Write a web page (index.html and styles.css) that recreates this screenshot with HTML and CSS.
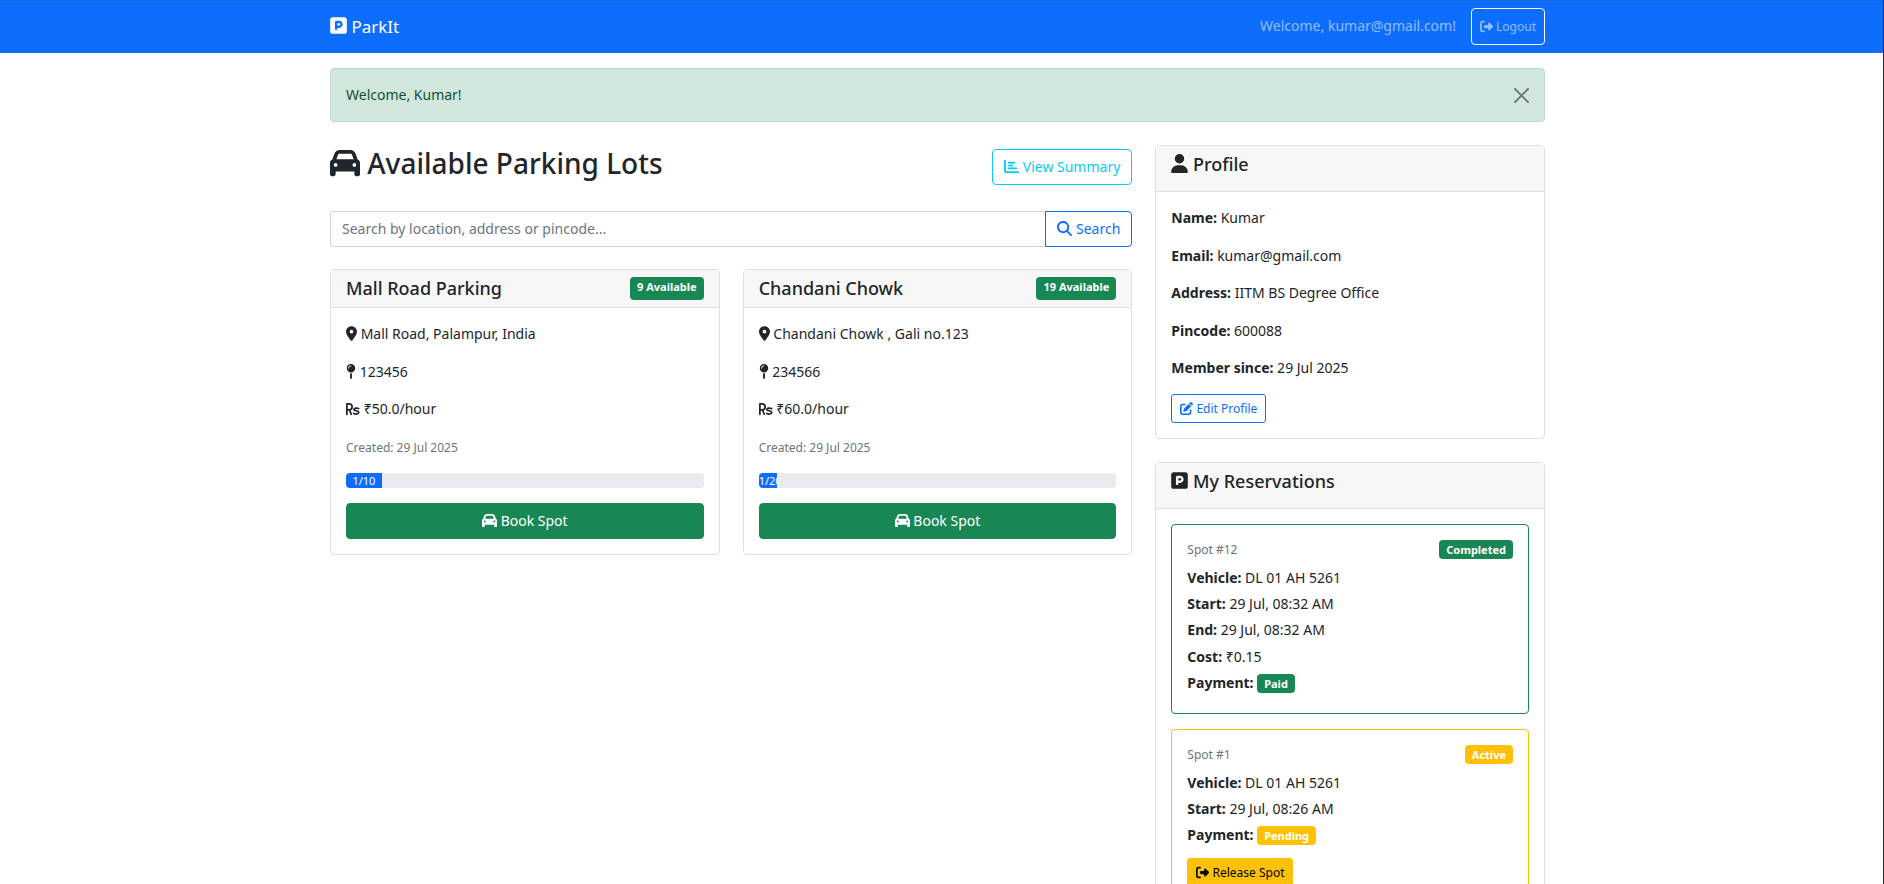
FILE: index.html
```html
<!DOCTYPE html>
<html lang="en">
<head>
<meta charset="utf-8">
<meta name="viewport" content="width=device-width, initial-scale=1">
<title>ParkIt</title>
<link rel="stylesheet" href="styles.css">
</head>
<body>
<svg class="sprite" aria-hidden="true">
  <symbol id="i-parking" viewBox="0 0 448 512"><path d="M64 32C28.700 32 0 60.700 0 96V416c0 35.300 28.700 64 64 64H384c35.300 0 64-28.700 64-64V96c0-35.300-28.700-64-64-64H64zM192 256h48c17.700 0 32-14.300 32-32s-14.300-32-32-32H192v64zm48 64H192v32c0 17.700-14.300 32-32 32s-32-14.300-32-32V288 168c0-22.100 17.900-40 40-40h72c53 0 96 43 96 96s-43 96-96 96z"/></symbol>
  <symbol id="i-car" viewBox="0 0 512 512"><path d="M135.200 117.400L109.100 192H402.900l-26.100-74.600C372.300 104.600 360.200 96 346.600 96H165.400c-13.600 0-25.700 8.600-30.200 21.400zM39.600 196.800L74.800 96.300C88.300 57.800 124.600 32 165.400 32H346.600c40.800 0 77.100 25.800 90.600 64.300l35.200 100.500c23.200 9.600 39.600 32.500 39.600 59.200V400v48c0 17.700-14.300 32-32 32H448c-17.700 0-32-14.300-32-32V400H96v48c0 17.700-14.300 32-32 32H32c-17.700 0-32-14.300-32-32V400 256c0-26.700 16.400-49.600 39.600-59.200zM128 288a32 32 0 1 0 -64 0 32 32 0 1 0 64 0zm288 32a32 32 0 1 0 0-64 32 32 0 1 0 0 64z"/></symbol>
  <symbol id="i-chart" viewBox="0 0 512 512"><path d="M32 32c17.700 0 32 14.300 32 32V400c0 8.800 7.200 16 16 16H480c17.700 0 32 14.300 32 32s-14.300 32-32 32H80c-44.200 0-80-35.800-80-80V64C0 46.300 14.300 32 32 32zm96 96c0-17.700 14.300-32 32-32l192 0c17.700 0 32 14.300 32 32s-14.300 32-32 32l-192 0c-17.700 0-32-14.300-32-32zm32 64H288c17.700 0 32 14.300 32 32s-14.300 32-32 32H160c-17.700 0-32-14.300-32-32s14.300-32 32-32zm0 96H416c17.700 0 32 14.300 32 32s-14.300 32-32 32H160c-17.700 0-32-14.300-32-32s14.300-32 32-32z"/></symbol>
  <symbol id="i-search" viewBox="0 0 512 512"><path d="M416 208c0 45.900-14.900 88.300-40 122.700L502.600 457.400c12.500 12.500 12.500 32.800 0 45.300s-32.800 12.500-45.300 0L330.700 376c-34.400 25.200-76.800 40-122.700 40C93.100 416 0 322.900 0 208S93.100 0 208 0S416 93.100 416 208zM208 352a144 144 0 1 0 0-288 144 144 0 1 0 0 288z"/></symbol>
  <symbol id="i-location" viewBox="0 0 384 512"><path d="M215.700 499.200C267 435 384 279.400 384 192C384 86 298 0 192 0S0 86 0 192c0 87.400 117 243 168.300 307.200c12.300 15.300 35.100 15.300 47.400 0zM192 128a64 64 0 1 1 0 128 64 64 0 1 1 0-128z"/></symbol>
  <symbol id="i-pin" viewBox="0 0 320 512"><path d="M16 144a144 144 0 1 1 288 0A144 144 0 1 1 16 144zM160 80c8.800 0 16-7.200 16-16s-7.200-16-16-16c-53 0-96 43-96 96c0 8.800 7.200 16 16 16s16-7.200 16-16c0-35.300 28.700-64 64-64zM128 480V317.100c10.400 1.900 21.100 2.900 32 2.900s21.600-1 32-2.900V480c0 17.700-14.300 32-32 32s-32-14.300-32-32z"/></symbol>
  <symbol id="i-rupee" viewBox="0 0 512 512"><g fill="none" stroke="currentColor" stroke-width="64" stroke-linecap="round" stroke-linejoin="round"><path d="M32 448V64h80a112 112 0 0 1 0 224H32M128 288l64 160"/><path d="M462 240c-60-24-162-24-172 28c-12 66 186 38 176 116c-8 66-120 66-184 34"/></g></symbol>
  <symbol id="i-user" viewBox="0 0 448 512"><path d="M224 256A128 128 0 1 0 224 0a128 128 0 1 0 0 256zm-45.700 48C79.800 304 0 383.800 0 482.300C0 498.700 13.300 512 29.700 512H418.300c16.400 0 29.700-13.300 29.700-29.700C448 383.800 368.200 304 269.700 304H178.300z"/></symbol>
  <symbol id="i-edit" viewBox="0 0 512 512"><path d="M471.600 21.700c-21.900-21.900-57.300-21.900-79.200 0L362.300 51.700l97.900 97.900 30.100-30.100c21.900-21.900 21.900-57.300 0-79.200L471.600 21.700zm-299.200 220c-6.100 6.100-10.800 13.600-13.500 21.900l-29.600 88.800c-2.900 8.600-.6 18.100 5.800 24.600s15.900 8.700 24.600 5.800l88.800-29.600c8.200-2.700 15.700-7.400 21.900-13.500L437.700 172.300 339.700 74.300 172.400 241.700zM96 64C43 64 0 107 0 160V416c0 53 43 96 96 96H352c53 0 96-43 96-96V320c0-17.700-14.300-32-32-32s-32 14.300-32 32v96c0 17.700-14.300 32-32 32H96c-17.700 0-32-14.300-32-32V160c0-17.700 14.300-32 32-32h96c17.700 0 32-14.300 32-32s-14.300-32-32-32H96z"/></symbol>
  <symbol id="i-exit" viewBox="0 0 512 512"><path d="M377.900 105.900L500.700 228.700c7.200 7.200 11.300 17.100 11.300 27.300s-4.100 20.100-11.300 27.300L377.900 406.100c-6.400 6.400-15 9.900-24 9.900c-18.700 0-33.900-15.200-33.900-33.900l0-62.100-128 0c-17.700 0-32-14.300-32-32l0-64c0-17.700 14.300-32 32-32l128 0 0-62.100c0-18.700 15.200-33.900 33.900-33.900c9 0 17.600 3.600 24 9.900zM160 96L96 96c-17.700 0-32 14.300-32 32l0 256c0 17.700 14.300 32 32 32l64 0c17.700 0 32 14.300 32 32s-14.300 32-32 32l-64 0c-53 0-96-43-96-96L0 128C0 75 43 32 96 32l64 0c17.700 0 32 14.300 32 32s-14.300 32-32 32z"/></symbol>
</svg>

<header class="navbar">
  <nav class="container navbar-row">
    <a class="brand" href="#"><svg class="icon icon-md w-448"><use href="#i-parking"/></svg> ParkIt</a>
    <div class="nav-user">
      <span>Welcome, kumar@gmail.com!</span>
      <a class="logout" href="#"><svg class="icon icon-sm"><use href="#i-exit"/></svg> Logout</a>
    </div>
  </nav>
</header>

<main class="container">
  <div class="alert" role="alert">
    <span>Welcome, Kumar!</span>
    <button class="alert-close" type="button" aria-label="Close"><svg viewBox="0 0 16 16"><path d="M1 1l14 14M15 1L1 15"/></svg></button>
  </div>

  <div class="layout">
    <section class="lots">
      <div class="title-row">
        <h2 class="title"><svg class="icon icon-lg"><use href="#i-car"/></svg> Available Parking Lots</h2>
        <a class="btn btn-outline-info" href="#"><svg class="icon"><use href="#i-chart"/></svg> View Summary</a>
      </div>

      <form class="search">
        <input class="search-input" type="text" aria-label="Search parking lots" placeholder="Search by location, address or pincode...">
        <button class="btn btn-outline-primary search-button" type="submit"><svg class="icon"><use href="#i-search"/></svg> Search</button>
      </form>

      <div class="lot-grid">
        <article class="card">
          <div class="card-header lot-header">
            <h5 class="card-title">Mall Road Parking</h5>
            <span class="badge badge-success">9 Available</span>
          </div>
          <div class="card-body">
            <p><svg class="icon w-384"><use href="#i-location"/></svg> Mall Road, Palampur, India</p>
            <p><svg class="icon w-320"><use href="#i-pin"/></svg> 123456</p>
            <p><svg class="icon icon-rupee"><use href="#i-rupee"/></svg> ₹50.0/hour</p>
            <p><small class="muted">Created: 29 Jul 2025</small></p>
            <div class="progress"><div class="progress-bar" style="width:10%">1/10</div></div>
            <button class="btn btn-success" type="button"><svg class="icon"><use href="#i-car"/></svg> Book Spot</button>
          </div>
        </article>

        <article class="card">
          <div class="card-header lot-header">
            <h5 class="card-title">Chandani Chowk</h5>
            <span class="badge badge-success">19 Available</span>
          </div>
          <div class="card-body">
            <p><svg class="icon w-384"><use href="#i-location"/></svg> Chandani Chowk , Gali no.123</p>
            <p><svg class="icon w-320"><use href="#i-pin"/></svg> 234566</p>
            <p><svg class="icon icon-rupee"><use href="#i-rupee"/></svg> ₹60.0/hour</p>
            <p><small class="muted">Created: 29 Jul 2025</small></p>
            <div class="progress"><div class="progress-bar" style="width:5%">1/20</div></div>
            <button class="btn btn-success" type="button"><svg class="icon"><use href="#i-car"/></svg> Book Spot</button>
          </div>
        </article>
      </div>
    </section>

    <aside class="side">
      <section class="card">
        <div class="card-header side-header">
          <h5 class="card-title"><svg class="icon icon-md w-448"><use href="#i-user"/></svg> Profile</h5>
        </div>
        <div class="card-body">
          <p><strong>Name:</strong> Kumar</p>
          <p><strong>Email:</strong> kumar@gmail.com</p>
          <p><strong>Address:</strong> IITM BS Degree Office</p>
          <p><strong>Pincode:</strong> 600088</p>
          <p><strong>Member since:</strong> 29 Jul 2025</p>
          <a class="btn btn-sm btn-outline-primary" href="#"><svg class="icon icon-sm"><use href="#i-edit"/></svg> Edit Profile</a>
        </div>
      </section>

      <section class="card">
        <div class="card-header side-header">
          <h5 class="card-title"><svg class="icon icon-md w-448"><use href="#i-parking"/></svg> My Reservations</h5>
        </div>
        <div class="card-body">
          <article class="card reservation reservation-done">
            <div class="reservation-top"><small class="muted">Spot #12</small><span class="badge badge-success">Completed</span></div>
            <p><strong>Vehicle:</strong> DL 01 AH 5261</p>
            <p><strong>Start:</strong> 29 Jul, 08:32 AM</p>
            <p><strong>End:</strong> 29 Jul, 08:32 AM</p>
            <p><strong>Cost:</strong> ₹0.15</p>
            <p><strong>Payment:</strong> <span class="badge badge-success">Paid</span></p>
          </article>
          <article class="card reservation reservation-active">
            <div class="reservation-top"><small class="muted">Spot #1</small><span class="badge badge-warning">Active</span></div>
            <p><strong>Vehicle:</strong> DL 01 AH 5261</p>
            <p><strong>Start:</strong> 29 Jul, 08:26 AM</p>
            <p><strong>Payment:</strong> <span class="badge badge-warning">Pending</span></p>
            <button class="btn btn-sm btn-warning" type="button"><svg class="icon icon-sm"><use href="#i-exit"/></svg> Release Spot</button>
          </article>
        </div>
      </section>
    </aside>
  </div>
</main>
</body>
</html>
```

FILE: styles.css
```css
* { box-sizing: border-box; }

body {
  margin: 0;
  height: 100vh;
  overflow: hidden;
  border-right: 1px solid #212529;
  background: #fff;
  color: #212529;
  font-family: "Noto Sans", "Open Sans", sans-serif;
  font-size: 14px;
  line-height: 1.6;
}

h2, h5, p { margin: 0; }
h2, h5 { font-weight: 500; }
a { text-decoration: none; }
button, input { font: inherit; }

.sprite { display: none; }

.icon {
  width: 15px;
  height: 15px;
  fill: currentColor;
  vertical-align: -2px;
  overflow: visible;
}
.icon.w-384 { width: 11px; }
.icon.w-320 { width: 10px; }
.icon-rupee { width: 14px; height: 14px; }
.icon-sm { width: 13px; height: 13px; }
.icon-md { width: 19px; height: 19px; }
.icon-md.w-448 { width: 17px; }
.icon-lg { width: 30px; height: 30px; vertical-align: -4px; }

.container {
  width: calc(100% - 8px);
  max-width: 1239px;
  margin-right: 8px;
  margin-left: max(0px, calc((100% - 1247px) / 2));
  padding: 0 12px;
}

.navbar {
  padding: 7px 0 8px;
  border-top: 1px solid #0f66e0;
  background: #0d6efd;
}
.navbar-row { display: flex; align-items: center; justify-content: space-between; }
.brand { color: #fff; font-size: 17px; line-height: 28px; }
.nav-user { display: flex; align-items: center; gap: 15px; color: rgba(255, 255, 255, .55); }
.logout {
  padding: 7px 8px;
  border: 1px solid #fff;
  border-radius: 4px;
  color: inherit;
  font-size: 12px;
  line-height: 21px;
}

.alert {
  display: flex;
  align-items: center;
  justify-content: space-between;
  margin: 15px 0 23px;
  padding: 15px;
  border: 1px solid #badbcc;
  border-radius: 4px;
  background: #d1e7dd;
  color: #0f5132;
}
.alert-close {
  display: flex;
  padding: 0;
  border: 0;
  background: none;
  opacity: .5;
}
.alert-close svg {
  width: 15px;
  height: 15px;
  fill: none;
  stroke: #000;
  stroke-width: 2;
  stroke-linecap: round;
}

.layout {
  display: grid;
  grid-template-columns: repeat(3, minmax(0, 1fr));
  gap: 23px;
}
.lots { grid-column: span 2; }
.title-row { display: flex; align-items: center; justify-content: space-between; margin-bottom: 23px; }
.title { margin-bottom: 6px; font-size: 28px; line-height: 37px; }

.btn {
  display: inline-block;
  padding: 6px 11px;
  border: 1px solid;
  border-radius: 4px;
  background: none;
  text-align: center;
  line-height: 22px;
}
.btn-sm { padding: 4px 8px; border-radius: 3px; font-size: 12px; line-height: 19px; }
.btn-outline-info { color: #0dcaf0; }
.btn-outline-primary { color: #0d6efd; }
.btn-success { width: 100%; border-color: #198754; background: #198754; color: #fff; }
.btn-warning { border-color: #ffc107; background: #ffc107; color: #000; }

.search { display: flex; margin-bottom: 22px; }
.search-input {
  flex: 1;
  min-width: 0;
  padding: 5px 11px;
  border: 1px solid #ced4da;
  border-right: 0;
  border-radius: 4px 0 0 4px;
  background: #fff;
  color: #212529;
}
.search-input::placeholder { color: #6c757d; opacity: 1; }
.search-button { border-radius: 0 4px 4px 0; }

.lot-grid { display: grid; grid-template-columns: repeat(2, minmax(0, 1fr)); gap: 23px; align-items: start; }

.card { border: 1px solid #dfdfdf; border-radius: 4px; background: #fff; }
.card-header { padding: 7px 15px; border-bottom: 1px solid #dfdfdf; background: #f7f7f7; }
.card-title { font-size: 18px; line-height: 23px; }
.lot-header { display: flex; justify-content: space-between; }
.side-header .card-title { margin-bottom: 8px; }
.card-body { padding: 15px; }
.card-body > p { margin-bottom: 15px; }
.muted { color: #6c757d; font-size: 12px; }

.badge {
  display: inline-block;
  padding: 4px 7px;
  border-radius: 4px;
  color: #fff;
  font-size: 11px;
  font-weight: 700;
  line-height: 11px;
}
.badge-success { background: #198754; }
.badge-warning { background: #ffc107; }

.progress {
  display: flex;
  height: 15px;
  margin-bottom: 15px;
  overflow: hidden;
  border-radius: 4px;
  background: #e9ecef;
  font-size: 11px;
  line-height: 15px;
}
.progress-bar { overflow: hidden; background: #0d6efd; color: #fff; text-align: center; }

.side { display: flex; flex-direction: column; gap: 23px; }
.reservation { padding: 15px; }
.reservation + .reservation { margin-top: 15px; }
.reservation-done { border-color: #198754; }
.reservation-active { border-color: #ffc107; }
.reservation-top { display: flex; align-items: flex-start; justify-content: space-between; margin-bottom: 7px; }
.reservation p { margin-bottom: 4px; }
.reservation .btn { margin-top: 7px; }
```
